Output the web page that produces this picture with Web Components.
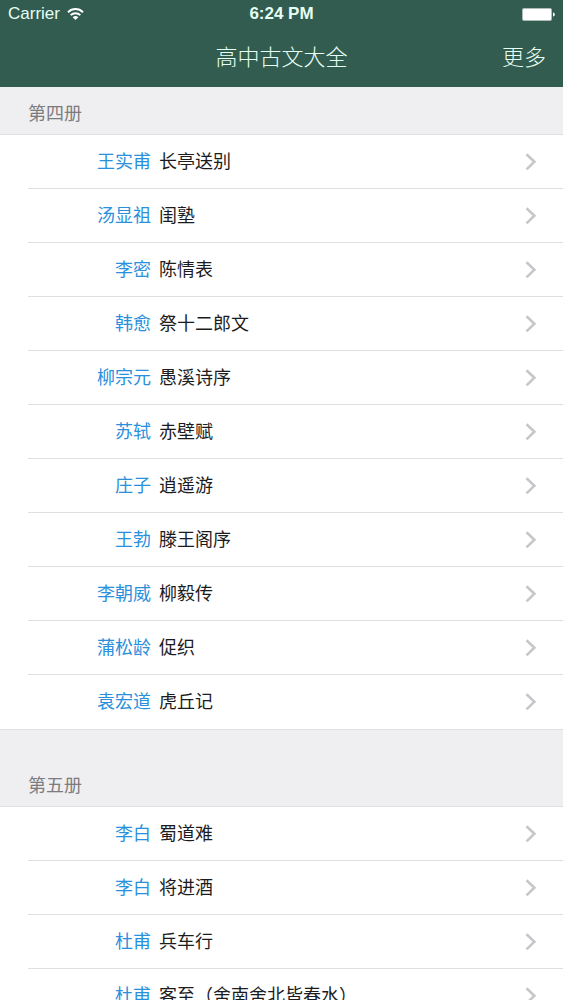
<!DOCTYPE html>
<html lang="zh-CN">
<head>
<meta charset="utf-8">
<meta name="viewport" content="width=device-width, initial-scale=1">
<title>高中古文大全</title>
<style>
	body {
		margin: 0;
		font-family: "Liberation Sans", "Noto Sans CJK SC", sans-serif;
		font-size: 18px;
		color: #1c1c1e;
		--bar: #325c4f;
		--page: #efeef1;
		--line: #dfdee2;
		--link: #2a90dc;
	}
</style>
</head>
<body>

<app-screen>
	<status-bar slot="top" carrier="Carrier" time="6:24 PM"></status-bar>
	<nav-bar slot="top" action="更多">高中古文大全</nav-bar>

	<text-section heading="第四册">
		<text-row author="王实甫">长亭送别</text-row>
		<text-row author="汤显祖">闺塾</text-row>
		<text-row author="李密">陈情表</text-row>
		<text-row author="韩愈">祭十二郎文</text-row>
		<text-row author="柳宗元">愚溪诗序</text-row>
		<text-row author="苏轼">赤壁赋</text-row>
		<text-row author="庄子">逍遥游</text-row>
		<text-row author="王勃">滕王阁序</text-row>
		<text-row author="李朝威">柳毅传</text-row>
		<text-row author="蒲松龄">促织</text-row>
		<text-row author="袁宏道">虎丘记</text-row>
	</text-section>

	<text-section heading="第五册">
		<text-row author="李白">蜀道难</text-row>
		<text-row author="李白">将进酒</text-row>
		<text-row author="杜甫">兵车行</text-row>
		<text-row author="杜甫">客至（舍南舍北皆春水）</text-row>
	</text-section>
</app-screen>

<script>
customElements.define('app-screen', class extends HTMLElement {
	constructor() {
		super();
		this.attachShadow({ mode: 'open' });
		this.shadowRoot.innerHTML = `
			<style>
			:host {
				display: flex;
				flex-direction: column;
				height: 100vh;
				background: var(--page);
			}

			header {
				flex: none;
				background: var(--bar);
				color: #e6fff5;
			}

			main {
				flex: 1;
				min-height: 0;
				overflow-y: auto;
				scrollbar-width: none;
			}
			</style>
			<header><slot name="top"></slot></header>
			<main><slot></slot></main>
		`;
	}
})

customElements.define('status-bar', class extends HTMLElement {
	constructor() {
		super();
		this.attachShadow({ mode: 'open' });
		this.shadowRoot.innerHTML = `
			<style>
			:host {
				display: grid;
				grid-template-columns: 1fr auto 1fr;
				align-items: center;
				height: 28px;
				padding: 0 8px;
				font-size: 17px;
			}

			.carrier {
				display: flex;
				align-items: center;
				gap: 7px;
			}

			.time {
				font-weight: 700;
			}

			.battery {
				justify-self: end;
			}

			svg {
				display: block;
			}
			</style>
			<span class="carrier">
				<span id="carrier"></span>
				<svg width="17" height="13" viewBox="0 0 17 13" fill="none" stroke="#fff" stroke-width="2" aria-hidden="true">
					<path d="M1 4.2C5.1 0 11.9 0 16 4.2"/>
					<path d="M3.7 7.1c2.6-2.6 7-2.6 9.6 0"/>
					<path d="M5.7 9.2c1.6-1.6 4-1.6 5.6 0l-2.8 2.9z" fill="#fff" stroke="none"/>
				</svg>
			</span>
			<span class="time" id="time"></span>
			<svg class="battery" width="33" height="13" viewBox="0 0 33 13" fill="#fff" aria-hidden="true">
				<rect width="30" height="13" rx="2" opacity=".6"/>
				<rect x="1" y="1" width="28" height="11" rx="1"/>
				<path d="M31 4.5c2.4.4 2.4 3.6 0 4z"/>
			</svg>
		`;
	}

	connectedCallback() {
		this.shadowRoot.getElementById('carrier').textContent = this.getAttribute('carrier');
		this.shadowRoot.getElementById('time').textContent = this.getAttribute('time');
	}
})

customElements.define('nav-bar', class extends HTMLElement {
	constructor() {
		super();
		this.attachShadow({ mode: 'open' });
		this.shadowRoot.innerHTML = `
			<style>
			:host {
				display: grid;
				grid-template-columns: 1fr auto 1fr;
				align-items: center;
				padding: 13px 17px;
				font-size: 22px;
				font-weight: 300;
				line-height: 33px;
			}

			h1 {
				grid-column: 2;
				margin: 0;
				font: inherit;
			}

			button {
				justify-self: end;
				padding: 0;
				border: 0;
				background: none;
				font: inherit;
				color: inherit;
				cursor: pointer;
			}
			</style>
			<h1><slot></slot></h1>
			<button type="button"></button>
		`;
	}

	connectedCallback() {
		this.shadowRoot.querySelector('button').textContent = this.getAttribute('action');
	}
})

customElements.define('text-section', class extends HTMLElement {
	constructor() {
		super();
		this.attachShadow({ mode: 'open' });
		this.shadowRoot.innerHTML = `
			<style>
			:host {
				display: block;
			}

			h2 {
				margin: 0;
				padding: 14px 28px 6px;
				font: inherit;
				line-height: 27px;
				color: #7c7c80;
			}

			/* grouped lists keep a wider gap between them */
			:host(:not(:first-of-type)) h2 {
				padding-top: 43px;
			}

			.rows {
				border: solid var(--line);
				border-width: 1px 0;
				background: #fff;
			}
			</style>
			<h2></h2>
			<div class="rows" role="list"><slot></slot></div>
		`;
	}

	connectedCallback() {
		this.shadowRoot.querySelector('h2').textContent = this.getAttribute('heading');
	}
})

customElements.define('text-row', class extends HTMLElement {
	constructor() {
		super();
		this.attachShadow({ mode: 'open' });
		this.shadowRoot.innerHTML = `
			<style>
			:host {
				display: block;
				padding-left: 28px;
			}

			a {
				display: flex;
				align-items: center;
				gap: 8px;
				padding: 14px 26px 12px 0;
				border-bottom: 1px solid var(--line);
				line-height: 27px;
				color: inherit;
				text-decoration: none;
			}

			:host(:last-child) a {
				border-bottom-color: transparent;
			}

			.author {
				flex: none;
				width: 123px;
				text-align: right;
				color: var(--link);
			}

			.title {
				flex: 1;
			}

			svg {
				flex: none;
			}
			</style>
			<a href="#">
				<span class="author"></span>
				<span class="title"><slot></slot></span>
				<svg width="12" height="20" viewBox="0 0 12 20" fill="none" stroke="#c7c7cb" stroke-width="2.6" aria-hidden="true">
					<path d="M1.5 1.2L9.4 8.8l-7.9 7.6"/>
				</svg>
			</a>
		`;
	}

	connectedCallback() {
		this.setAttribute('role', 'listitem');
		this.shadowRoot.querySelector('.author').textContent = this.getAttribute('author');
	}
})
</script>
</body>
</html>
